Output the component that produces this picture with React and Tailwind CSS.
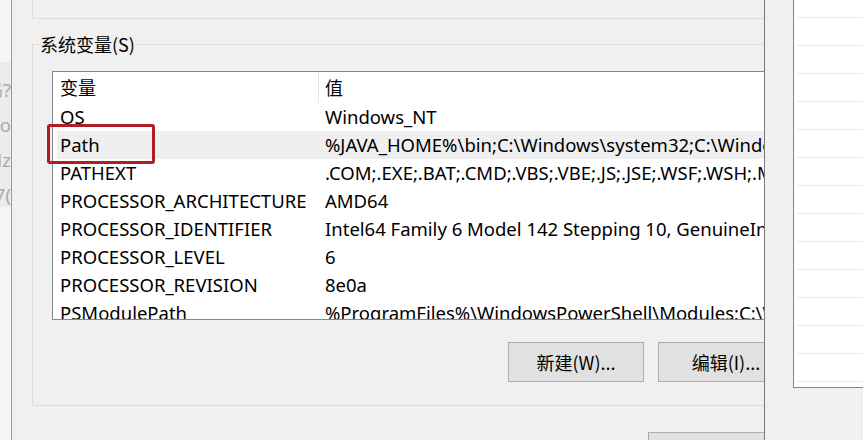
const rows = [
  ["OS", "Windows_NT"],
  ["Path", "%JAVA_HOME%\\bin;C:\\Windows\\system32;C:\\Windows;C:\\Windows\\System32\\Wbem"],
  ["PATHEXT", ".COM;.EXE;.BAT;.CMD;.VBS;.VBE;.JS;.JSE;.WSF;.WSH;.MSC"],
  ["PROCESSOR_ARCHITECTURE", "AMD64"],
  ["PROCESSOR_IDENTIFIER", "Intel64 Family 6 Model 142 Stepping 10, GenuineIntel"],
  ["PROCESSOR_LEVEL", "6"],
  ["PROCESSOR_REVISION", "8e0a"],
  ["PSModulePath", "%ProgramFiles%\\WindowsPowerShell\\Modules;C:\\Windows\\system32\\WindowsPowerShell"],
];

const ghost = ["吗?", "o", "Nz", "7("];

export default function App() {
  return (
    <div className="relative w-[863px] h-[440px] overflow-hidden bg-[#f0f0f0] flex font-['Noto_Sans','Noto_Sans_CJK_SC',sans-serif] text-[18.5px] text-black">
      {/* window behind, clipped on the left */}
      <div className="w-[12px] shrink-0 border-r border-[#9a9a9a] bg-[#f6f6f6] pt-[62px]">
        <div className="h-[145px] bg-[#ececec] overflow-hidden text-[#a9a9a9] flex flex-col pt-[10px]">
          {ghost.map((g) => (
            <div key={g} className="h-[35px] shrink-0 leading-[35px] whitespace-nowrap flex justify-end">
              {g}
            </div>
          ))}
        </div>
      </div>

      {/* environment variables dialog */}
      <div className="flex-1 flex flex-col pl-[20px]">
        <div className="h-[19px] shrink-0 w-[800px] border-l border-b border-[#dcdcdc]" />

        <div className="relative shrink-0 mt-[25px] w-[800px] border border-[#dcdcdc] pt-[26px] pl-[19px] pb-[23px]">
          <span className="absolute -top-[13px] left-[6px] px-[1px] bg-[#f0f0f0] leading-[24px] text-[18px] font-['Noto_Sans_CJK_SC',sans-serif]">
            系统变量(S)
          </span>

          <div className="w-[760px] h-[249px] border border-[#828790] bg-white overflow-hidden">
            <div className="flex h-[31px] items-center text-[18px]">
              <div className="w-[265px] pl-[7px] font-['Noto_Sans_CJK_SC',sans-serif]">变量</div>
              <div className="h-full border-l border-[#e5e5e5] pl-[6px] flex items-center font-['Noto_Sans_CJK_SC',sans-serif]">
                值
              </div>
            </div>
            {rows.map(([name, value]) => (
              <div
                key={name}
                className={`flex h-[28px] items-center whitespace-nowrap ${
                  name === "Path" ? "ml-[4px] bg-[#efefef]" : ""
                }`}
              >
                <div className={`${name === "Path" ? "w-[261px] pl-[3px]" : "w-[265px] pl-[7px]"} shrink-0`}>
                  {name}
                </div>
                <div className="pl-[7px]">{value}</div>
              </div>
            ))}
          </div>

          <div className="mt-[22px] flex gap-[14px] pl-[456px] text-[18px]">
            <button className="w-[136px] h-[40px] shrink-0 border border-[#adadad] bg-[#e1e1e1] font-['Noto_Sans_CJK_SC',sans-serif]">
              新建(W)...
            </button>
            <button className="w-[136px] h-[40px] shrink-0 border border-[#adadad] bg-[#e1e1e1] font-['Noto_Sans_CJK_SC',sans-serif]">
              编辑(I)...
            </button>
          </div>
        </div>

        <button className="mt-[26px] ml-[616px] w-[136px] h-[40px] shrink-0 border border-[#adadad] bg-[#e1e1e1]" />
      </div>

      {/* window on top, right side */}
      <div className="absolute left-[764px] top-0 w-[99px] h-full border-l border-[#7a7a7a] bg-[#f0f0f0]">
        <div className="ml-[28px] h-[388px] border-l border-b border-[#828790] bg-white overflow-hidden flex flex-col">
          <div className="h-[17px] shrink-0" />
          {Array.from({ length: 14 }).map((_, i) => (
            <div key={i} className="h-[28px] shrink-0 ml-[2px] border-t border-[#ebebeb]" />
          ))}
        </div>
      </div>

      {/* red highlight annotation */}
      <div className="absolute left-[47px] top-[124px] w-[108px] h-[40px] border-[3px] border-[#b01e23] rounded-[3px]" />
    </div>
  );
}
